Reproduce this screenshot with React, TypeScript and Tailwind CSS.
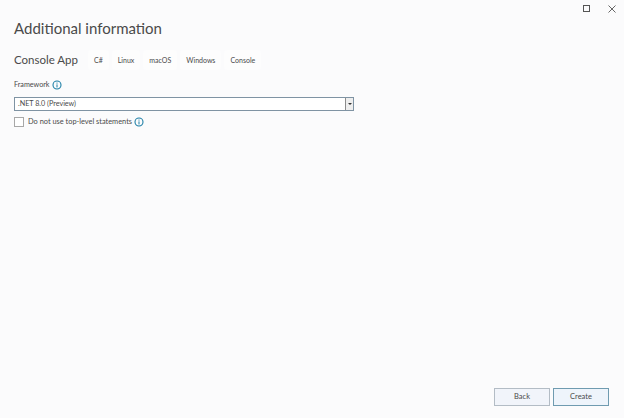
const tags = ["C#", "Linux", "macOS", "Windows", "Console"]

const InfoIcon = () => (
    <svg width="10" height="10" viewBox="0 0 10 10" className="shrink-0">
        <circle cx="5" cy="5" r="4" fill="none" stroke="#1c7ea6" strokeWidth="1.1" />
        <rect x="4.5" y="4.4" width="1" height="3" fill="#1c7ea6" />
        <rect x="4.5" y="2.6" width="1" height="1" fill="#1c7ea6" />
    </svg>
)

export default function App() {
    return (
        <div className="w-[624px] h-[418px] bg-[#fbfbfc] flex flex-col font-['Lato',sans-serif] text-[#4a4a4a] overflow-hidden">
            <div className="h-[17px] flex justify-end items-center gap-[18px] pr-[8px]">
                <div className="w-[7px] h-[7px] border border-[#555]"></div>
                <svg width="8" height="8" viewBox="0 0 8 8">
                    <path d="M0.5 0.5L7.5 7.5M7.5 0.5L0.5 7.5" stroke="#666" strokeWidth="1" />
                </svg>
            </div>
            <div className="flex flex-col pl-[14px] flex-1">
                <h1 className="text-[15px] leading-[22px]">Additional information</h1>
                <div className="flex items-center mt-[11px] h-[20px]">
                    <span className="text-[11.5px] w-[74px]">Console App</span>
                    <div className="flex items-center gap-[3px]">
                        {tags.map((tag) => (
                            <span key={tag} className="text-[7px] px-[6px] h-[20px] flex items-center rounded-sm bg-[#fdfdfd]">{tag}</span>
                        ))}
                    </div>
                </div>
                <div className="flex items-center gap-[2px] mt-[8px] h-[14px]">
                    <span className="text-[7.2px]">Framework</span>
                    <InfoIcon />
                </div>
                <div className="w-[340px] h-[14px] mt-[5px] bg-white border border-[#7f93a3] flex items-center justify-between">
                    <span className="text-[7.2px] pl-[3px]">.NET 8.0 (Preview)</span>
                    <div className="w-[8px] h-full border-l border-[#8b8b8b] bg-[#eeeeee] flex items-center justify-center">
                        <div className="w-0 h-0 border-x-[2px] border-x-transparent border-t-[2px] border-t-[#333]"></div>
                    </div>
                </div>
                <div className="flex items-center mt-[5px] h-[12px]">
                    <div className="w-[10px] h-[10px] border border-[#a8a8a8] bg-white"></div>
                    <span className="text-[7.4px] ml-[4px]">Do not use top-level statements</span>
                    <div className="ml-[2px]"><InfoIcon /></div>
                </div>
                <div className="flex-1 flex justify-end items-end gap-[3px] pr-[15px] pb-[12px]">
                    <button className="w-[56px] h-[18px] text-[7.5px] border border-[#b3bcc5] bg-[#f1f4fa]">Back</button>
                    <button className="w-[56px] h-[18px] text-[7.5px] border border-[#6f9bb0] bg-[#eef4fb]">Create</button>
                </div>
            </div>
        </div>
    )
}
